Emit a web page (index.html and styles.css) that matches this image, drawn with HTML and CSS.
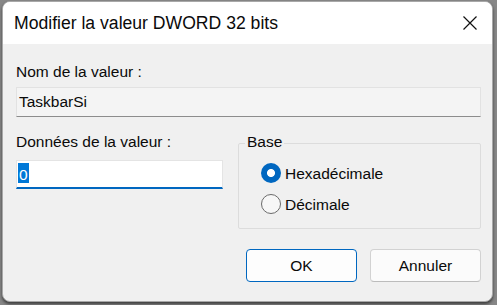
FILE: index.html
```html
<!DOCTYPE html>
<html lang="fr">
<head>
<meta charset="utf-8">
<title>Modifier la valeur DWORD 32 bits</title>
<link rel="stylesheet" href="styles.css">
</head>
<body>
<div class="window">
  <div class="titlebar">
    <span class="title">Modifier la valeur DWORD 32 bits</span>
    <svg class="close" width="16" height="16" viewBox="0 0 16 16" aria-label="Fermer"><path d="M1.5 1.5 L14.5 14.5 M14.5 1.5 L1.5 14.5" stroke="#111111" stroke-width="1.2" fill="none"/></svg>
  </div>
  <div class="content">
    <div class="label">Nom de la valeur :</div>
    <div class="field readonly">TaskbarSi</div>
    <div class="row">
      <div class="col">
        <div class="label">Données de la valeur :</div>
        <div class="field input"><span class="sel">0</span></div>
      </div>
      <fieldset class="group">
        <legend>Base</legend>
        <div class="radio"><span class="dot on"></span><span class="rtext">Hexadécimale</span></div>
        <div class="radio"><span class="dot"></span><span class="rtext">Décimale</span></div>
      </fieldset>
    </div>
    <div class="buttons">
      <button class="btn primary">OK</button>
      <button class="btn">Annuler</button>
    </div>
  </div>
</div>
</body>
</html>
```
FILE: styles.css
```css
html, body {
  margin: 0;
  padding: 0;
}
body {
  width: 497px;
  height: 305px;
  overflow: hidden;
  background: #878787;
  font-family: "Liberation Sans", Arial, sans-serif;
  color: #0a0a0a;
}
.window {
  margin: 1px 0 0 2px;
  width: 491px;
  height: 301px;
  box-sizing: border-box;
  border: 1px solid #a8a8a8;
  border-radius: 8px;
  background: #f0f0f0;
  overflow: hidden;
  box-shadow: 0 2px 3px rgba(0, 0, 0, 0.55);
}
.titlebar {
  height: 42px;
  background: #ffffff;
  display: flex;
  align-items: center;
  justify-content: space-between;
  padding: 0 14px 0 11px;
}
.title {
  font-size: 17.6px;
  line-height: 20px;
}
.close {
  display: block;
}
.content {
  padding: 19px 11px 0 13px;
}
.label {
  font-size: 15.5px;
  line-height: 18px;
}
.field {
  box-sizing: border-box;
  font-size: 15.5px;
  line-height: 18px;
}
.readonly {
  height: 30px;
  margin-top: 6px;
  padding: 5px 2px 0;
  background: #f4f4f4;
  border: 1px solid #e2e2e2;
  border-bottom-color: #8c8c8c;
}
.row {
  display: flex;
  gap: 15px;
  margin-top: 16px;
}
.col {
  width: 207px;
}
.input {
  height: 29px;
  margin-top: 9px;
  padding: 2px 1px 0;
  background: #ffffff;
  border: 1px solid #e4e4e4;
  border-bottom: 2px solid #0067c0;
}
.sel {
  display: inline-block;
  height: 17px;
  line-height: 17px;
  padding: 3px 1px 0;
  background: #0078d7;
  color: #ffffff;
}
.group {
  margin: 0;
  padding: 3px 0 9px 6px;
  width: 243px;
  min-width: 0;
  box-sizing: border-box;
  border: 1px solid #dcdcdc;
  border-radius: 2px;
}
.group legend {
  font-size: 15.5px;
  line-height: 18px;
  padding: 0 2px 3px;
}
.radio {
  display: flex;
  align-items: center;
  height: 31px;
  margin-left: 16px;
  font-size: 15.5px;
  line-height: 18px;
}
.rtext {
  padding-top: 2px;
}
.dot {
  width: 20px;
  height: 20px;
  box-sizing: border-box;
  border-radius: 50%;
  border: 1px solid #6b6b6b;
  background: #f7f7f7;
  margin-right: 4px;
  flex: none;
}
.dot.on {
  border: none;
  background: radial-gradient(circle at center, #ffffff 0 3.6px, #0067c0 4.4px);
}
.buttons {
  display: flex;
  justify-content: flex-end;
  gap: 13px;
  margin-top: 20px;
}
.btn {
  width: 111px;
  height: 33px;
  box-sizing: border-box;
  padding: 0;
  border-radius: 4px;
  font-family: "Liberation Sans", Arial, sans-serif;
  font-size: 15.5px;
  line-height: 18px;
  color: #0a0a0a;
  background: #fbfbfb;
  border: 1px solid #d2d2d2;
  border-bottom-color: #bcbcbc;
}
.btn.primary {
  background: #fdfdfd;
  border: 1px solid #0067c0;
}
```
